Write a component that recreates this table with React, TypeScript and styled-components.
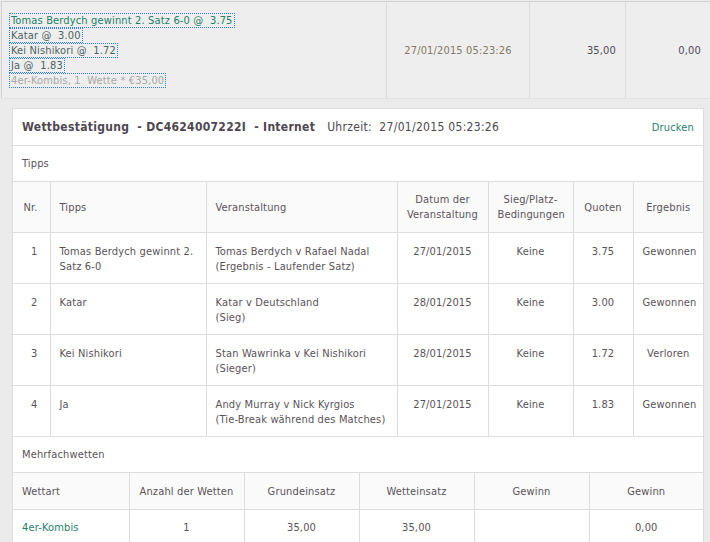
import React from "react";
import styled, { createGlobalStyle } from "styled-components";

const GlobalStyle = createGlobalStyle`
  html, body {
    margin: 0;
    padding: 0;
    background: #ebebeb;
  }
  body {
    font-family: "DejaVu Sans Condensed", "DejaVu Sans", Verdana, sans-serif;
    font-size: 11px;
    letter-spacing: 0.15px;
    color: #5a525a;
  }
`;

const tipps = [
  {
    nr: 1,
    tipp: "Tomas Berdych gewinnt 2. Satz 6-0",
    event: "Tomas Berdych v Rafael Nadal",
    market: "(Ergebnis - Laufender Satz)",
    date: "27/01/2015",
    quote: "3.75",
    result: "Gewonnen",
  },
  {
    nr: 2,
    tipp: "Katar",
    event: "Katar v Deutschland",
    market: "(Sieg)",
    date: "28/01/2015",
    quote: "3.00",
    result: "Gewonnen",
  },
  {
    nr: 3,
    tipp: "Kei Nishikori",
    event: "Stan Wawrinka v Kei Nishikori",
    market: "(Sieger)",
    date: "28/01/2015",
    quote: "1.72",
    result: "Verloren",
  },
  {
    nr: 4,
    tipp: "Ja",
    event: "Andy Murray v Nick Kyrgios",
    market: "(Tie-Break während des Matches)",
    date: "27/01/2015",
    quote: "1.83",
    result: "Gewonnen",
  },
];

const App = () => {
  return (
    <Page>
      <GlobalStyle />
      <Summary>
        <SummaryBets>
          <BetLine $tone="lead">Tomas Berdych gewinnt 2. Satz 6-0 @&nbsp; 3.75</BetLine>
          <BetLine>Katar @&nbsp; 3.00</BetLine>
          <BetLine>Kei Nishikori @&nbsp; 1.72</BetLine>
          <BetLine>Ja @&nbsp; 1.83</BetLine>
          <BetLine $tone="muted">4er-Kombis, 1&nbsp; Wette * €35,00</BetLine>
        </SummaryBets>
        <SummaryCell $w={143} $align="center" $color="#857868">
          27/01/2015 05:23:26
        </SummaryCell>
        <SummaryCell $w={96} $align="right">
          35,00
        </SummaryCell>
        <SummaryCell $align="right">0,00</SummaryCell>
      </Summary>

      <Panel>
        <PanelHead>
          <HeadTitle>
            <strong>Wettbestätigung&nbsp; - DC4624007222I&nbsp; - Internet</strong>
            <HeadTime>Uhrzeit:&nbsp; 27/01/2015 05:23:26</HeadTime>
          </HeadTitle>
          <PrintLink>Drucken</PrintLink>
        </PanelHead>
        <SectionLabel>Tipps</SectionLabel>
        <Grid>
          <colgroup>
            <col style={{ width: 37 }} />
            <col style={{ width: 156 }} />
            <col style={{ width: 191 }} />
            <col style={{ width: 91 }} />
            <col style={{ width: 85 }} />
            <col style={{ width: 60 }} />
            <col />
          </colgroup>
          <thead>
            <tr>
              <Th $h={51} $align="right">
                Nr.
              </Th>
              <Th $align="left">Tipps</Th>
              <Th $align="left">Veranstaltung</Th>
              <Th>
                Datum der
                <br />
                Veranstaltung
              </Th>
              <Th>
                Sieg/Platz-
                <br />
                Bedingungen
              </Th>
              <Th>Quoten</Th>
              <Th>Ergebnis</Th>
            </tr>
          </thead>
          <tbody>
            {tipps.map((t) => (
              <tr key={t.nr}>
                <Td $top $align="right">
                  {t.nr}
                </Td>
                <Td $top $align="left">
                  {t.tipp}
                </Td>
                <Td $top $align="left" $nowrap>
                  {t.event}
                  <br />
                  {t.market}
                </Td>
                <Td $top>{t.date}</Td>
                <Td $top>Keine</Td>
                <Td $top>{t.quote}</Td>
                <Td $top>{t.result}</Td>
              </tr>
            ))}
          </tbody>
        </Grid>
        <SectionLabel>Mehrfachwetten</SectionLabel>
        <Grid>
          <colgroup>
            <col style={{ width: 116 }} />
            <col style={{ width: 115 }} />
            <col style={{ width: 115 }} />
            <col style={{ width: 115 }} />
            <col style={{ width: 115 }} />
            <col />
          </colgroup>
          <thead>
            <tr>
              <Th $h={37} $align="left">
                Wettart
              </Th>
              <Th>Anzahl der Wetten</Th>
              <Th>Grundeinsatz</Th>
              <Th>Wetteinsatz</Th>
              <Th>Gewinn</Th>
              <Th>Gewinn</Th>
            </tr>
          </thead>
          <tbody>
            <tr>
              <Td $align="left" $color="#27806c">
                4er-Kombis
              </Td>
              <Td>1</Td>
              <Td>35,00</Td>
              <Td>35,00</Td>
              <Td></Td>
              <Td>0,00</Td>
            </tr>
          </tbody>
        </Grid>
      </Panel>
    </Page>
  );
};

export default App;

const Page = styled.div`
  padding-top: 1px;
  padding-left: 1px;
  padding-bottom: 20px;
`;

const Summary = styled.div`
  display: flex;
  height: 96px;
  background: #eeeeee;
  border-top: 1px solid #d2d2d2;
  border-left: 1px solid #d2d2d2;
  border-bottom: 1px solid #e2e2e2;
`;

const SummaryBets = styled.div`
  width: 384px;
  padding: 12px 0 0 8px;
  box-sizing: border-box;
  display: flex;
  flex-direction: column;
  align-items: flex-start;
`;

const BetLine = styled.span<{ $tone?: "lead" | "muted" }>`
  display: inline-block;
  line-height: 13px;
  padding: 0 1px;
  margin-bottom: 2px;
  outline: 1px dotted #2f7cf6;
  color: ${(p) =>
    p.$tone === "lead" ? "#1f7f68" : p.$tone === "muted" ? "#a8a8a8" : "#4d6462"};
`;

const SummaryCell = styled.div<{ $w?: number; $align: string; $color?: string }>`
  ${(p) => (p.$w ? `width: ${p.$w}px;` : "flex: 1;")}
  box-sizing: border-box;
  border-left: 1px solid #dddddd;
  display: flex;
  align-items: center;
  justify-content: ${(p) => (p.$align === "center" ? "center" : "flex-end")};
  padding: 0 ${(p) => (p.$align === "right" ? "9px" : "0")} 0 0;
  color: ${(p) => p.$color || "#4e4a56"};
`;

const Panel = styled.div`
  margin: 9px 6px 0 11px;
  background: #ffffff;
  border: 1px solid #dcdcdc;
`;

const PanelHead = styled.div`
  display: flex;
  align-items: center;
  justify-content: space-between;
  height: 36px;
  padding: 0 9px 0 9px;
  border-bottom: 1px solid #dddddd;
`;

const HeadTitle = styled.div`
  font-size: 12px;
  letter-spacing: 0.3px;
  color: #4e4650;
  strong {
    font-weight: bold;
  }
`;

const HeadTime = styled.span`
  margin-left: 12px;
`;

const PrintLink = styled.span`
  color: #27806c;
  font-size: 11px;
`;

const SectionLabel = styled.div`
  height: 35px;
  line-height: 35px;
  padding-left: 9px;
  border-bottom: 1px solid #dddddd;
`;

const Grid = styled.table`
  width: 100%;
  border-collapse: collapse;
  table-layout: fixed;
  tr > *:first-child {
    border-left: none;
  }
  tr > *:last-child {
    border-right: none;
  }
`;

const Th = styled.th<{ $align?: string; $h?: number }>`
  height: ${(p) => (p.$h ? `${p.$h - 1}px` : "auto")};
  background: #fafafa;
  font-weight: normal;
  text-align: ${(p) => p.$align || "center"};
  vertical-align: middle;
  padding: 0 ${(p) => (p.$align === "right" ? "12px" : "9px")} 0 9px;
  line-height: 15px;
  border: 1px solid #dddddd;
  border-top: none;
`;

const Td = styled.td<{
  $align?: string;
  $top?: boolean;
  $color?: string;
  $nowrap?: boolean;
}>`
  height: ${(p) => (p.$top ? "51px" : "36px")};
  box-sizing: border-box;
  text-align: ${(p) => p.$align || "center"};
  vertical-align: ${(p) => (p.$top ? "top" : "middle")};
  padding: ${(p) => (p.$top ? "11px" : "0")} ${(p) => (p.$align === "right" ? "12px" : "9px")} 0 9px;
  line-height: 15px;
  white-space: ${(p) => (p.$nowrap ? "nowrap" : "normal")};
  border: 1px solid #dddddd;
  color: ${(p) => p.$color || "inherit"};
`;
